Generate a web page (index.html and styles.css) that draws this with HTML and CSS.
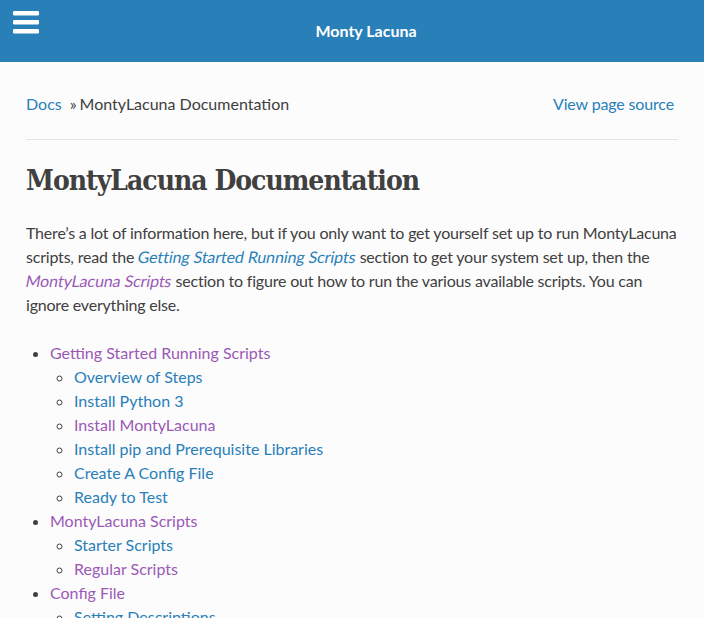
FILE: index.html
```html
<!DOCTYPE html>
<html lang="en">
<head>
<meta charset="utf-8">
<title>MontyLacuna Documentation</title>
<link rel="stylesheet" href="styles.css">
</head>
<body>
<nav class="top-bar">
  <span class="menu-icon" aria-label="menu">
    <svg width="26" height="23" viewBox="0 0 26 23"><rect x="0" y="0" width="26" height="4.4" rx="1.2" fill="#fff"/><rect x="0" y="9" width="26" height="4.4" rx="1.2" fill="#fff"/><rect x="0" y="18" width="26" height="4.4" rx="1.2" fill="#fff"/></svg>
  </span>
  <a class="site-title" href="#">Monty Lacuna</a>
</nav>
<main class="content">
  <div class="breadcrumbs">
    <div class="crumbs"><a class="link" href="#">Docs</a><span class="sep">»</span>MontyLacuna Documentation</div>
    <a class="link aside" href="#">View page source</a>
  </div>
  <hr class="rule">
  <h1 class="title">MontyLacuna Documentation</h1>
  <p class="para">There’s a lot of information here, but if you only want to get yourself set up to run MontyLacuna scripts, read the <a class="link em" href="#">Getting Started Running Scripts</a> section to get your system set up, then the <a class="link em visited" href="#">MontyLacuna Scripts</a> section to figure out how to run the various available scripts. You can ignore everything else.</p>
  <ul class="toc">
    <li><a class="link visited" href="#">Getting Started Running Scripts</a>
      <ul class="toc-sub">
        <li><a class="link" href="#">Overview of Steps</a></li>
        <li><a class="link" href="#">Install Python 3</a></li>
        <li><a class="link visited" href="#">Install MontyLacuna</a></li>
        <li><a class="link" href="#">Install pip and Prerequisite Libraries</a></li>
        <li><a class="link" href="#">Create A Config File</a></li>
        <li><a class="link" href="#">Ready to Test</a></li>
      </ul>
    </li>
    <li><a class="link visited" href="#">MontyLacuna Scripts</a>
      <ul class="toc-sub">
        <li><a class="link" href="#">Starter Scripts</a></li>
        <li><a class="link visited" href="#">Regular Scripts</a></li>
      </ul>
    </li>
    <li><a class="link visited" href="#">Config File</a>
      <ul class="toc-sub">
        <li><a class="link" href="#">Setting Descriptions</a></li>
      </ul>
    </li>
  </ul>
</main>
</body>
</html>
```

FILE: styles.css
```css
html, body {
  margin: 0;
  padding: 0;
}
body {
  background: #fcfcfc;
  color: #404040;
  font-family: Lato, "Open Sans", sans-serif;
  font-size: 16px;
  line-height: 24px;
}
.top-bar {
  display: flex;
  align-items: flex-start;
  height: 62px;
  box-sizing: border-box;
  padding: 0 13px;
  background: #2980b9;
  color: #fff;
}
.menu-icon {
  width: 28px;
  flex: none;
  padding-top: 11px;
  line-height: 0;
}
.site-title {
  flex: 1;
  text-align: center;
  padding-top: 19px;
  color: #fff;
  font-weight: bold;
  text-decoration: none;
}
.content {
  padding: 30px 26px 26px;
}
.breadcrumbs {
  display: flex;
  justify-content: space-between;
}
.sep {
  margin: 0 3px 0 8px;
}
.aside {
  padding-right: 4px;
  letter-spacing: -0.15px;
}
.link {
  color: #2980b9;
  text-decoration: none;
}
.link.visited {
  color: #9b59b6;
}
.em {
  display: inline-block;
  transform: skewX(-11deg);
  letter-spacing: -0.1px;
}
.rule {
  margin: 23px 0 24px;
  border: 0;
  border-top: 1px solid #e1e4e5;
  height: 0;
}
.title {
  margin: 0 0 23px;
  font-family: "DejaVu Serif Condensed", "DejaVu Serif", serif;
  font-stretch: condensed;
  font-weight: bold;
  font-size: 28px;
  line-height: 33.6px;
  letter-spacing: -1px;
  color: #404040;
}
.para {
  margin: 0 0 24px;
  letter-spacing: -0.2px;
}
.toc {
  margin: 0 0 24px 24px;
  padding: 0;
  list-style: disc;
}
.toc-sub {
  margin: 0 0 0 24px;
  padding: 0;
  list-style: circle;
}
```
